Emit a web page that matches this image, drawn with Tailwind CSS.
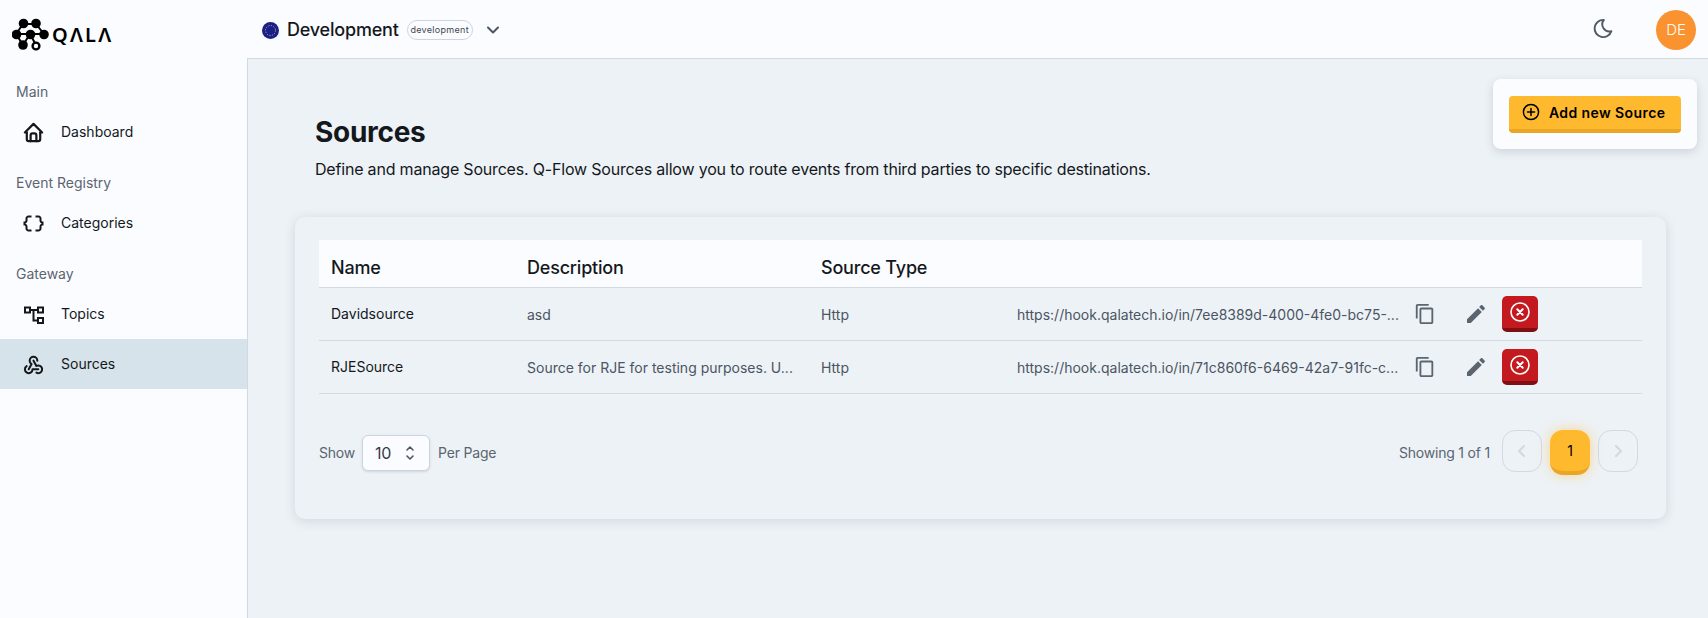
<!DOCTYPE html>
<html lang="en">
<head>
    <meta charset="UTF-8">
    <title>Sources</title>
    <script src="https://cdn.jsdelivr.net/npm/@tailwindcss/browser@4"></script>
</head>
<body class="bg-[#fbfcff] text-[#14181c] font-[Inter,sans-serif]">
    <div class="flex h-[618px] w-[1708px] overflow-hidden">

        <!-- Sidebar -->
        <aside class="w-[247px] shrink-0 bg-[#fbfcff]">
            <div class="h-[76px] pl-[12px] pt-[13px] flex items-start gap-[0px]">
                <svg class="w-[40px] h-[44px] shrink-0" viewBox="11 16 40 44" fill="#000">
                    <path d="M22 27H35M22 27L15 37M35 27L43 37M15 37H43M29 37L22 48M29 37L35 48M15 37L22 48" stroke="#000" stroke-width="2" fill="none"/>
                    <circle cx="22.5" cy="26.5" r="4.8"/><circle cx="35" cy="26.5" r="4.8"/>
                    <circle cx="15.5" cy="37.5" r="4.8"/><circle cx="29.5" cy="37.5" r="4.8"/><circle cx="43" cy="37.5" r="4.8"/>
                    <circle cx="22" cy="48" r="4.8"/>
                    <circle cx="35" cy="49" r="3.4" fill="#fbfcff" stroke="#000" stroke-width="2.4"/>
                </svg>
                <span class="text-[20px] leading-[24px] mt-[10px] font-semibold tracking-[2.2px] text-black font-['Noto_Sans',sans-serif]">QΛLΛ</span>
            </div>

            <p class="pl-4 text-sm leading-5 text-[#5b6570] mt-[6px]">Main</p>
            <a class="h-[50px] mt-[5px] pl-[22px] flex items-center gap-[16px] text-sm">
                <svg class="w-[23px] h-[23px] shrink-0" viewBox="0 0 24 24" fill="none" stroke="#14181c" stroke-width="2.3" stroke-linecap="round" stroke-linejoin="round"><path d="M5 12l-2 0l9 -9l9 9l-2 0"/><path d="M5 12v7a2 2 0 0 0 2 2h10a2 2 0 0 0 2 -2v-7"/><path d="M9 21v-6a2 2 0 0 1 2 -2h2a2 2 0 0 1 2 2v6"/></svg>
                Dashboard
            </a>

            <p class="pl-4 text-sm leading-5 text-[#5b6570] mt-[16px]">Event Registry</p>
            <a class="h-[50px] mt-[5px] pl-[21px] flex items-center gap-[15px] text-sm">
                <svg class="w-[25px] h-[25px] shrink-0" viewBox="-0.5 -0.5 25 25" fill="#14181c"><path d="M4 7v2c0 .55-.45 1-1 1H2v4h1c.55 0 1 .45 1 1v2c0 1.65 1.35 3 3 3h3v-2H7c-.55 0-1-.45-1-1v-2c0-1.3-.84-2.42-2-2.83v-.34C5.16 11.42 6 10.3 6 9V7c0-.55.45-1 1-1h3V4H7C5.35 4 4 5.35 4 7zM21 10c-.55 0-1-.45-1-1V7c0-1.65-1.35-3-3-3h-3v2h3c.55 0 1 .45 1 1v2c0 1.3.84 2.42 2 2.83v.34c-1.16.41-2 1.52-2 2.83v2c0 .55-.45 1-1 1h-3v2h3c1.65 0 3-1.35 3-3v-2c0-.55.45-1 1-1h1v-4h-1z"/></svg>
                Categories
            </a>

            <p class="pl-4 text-sm leading-5 text-[#5b6570] mt-[16px]">Gateway</p>
            <a class="h-[50px] mt-[5px] pl-[21px] flex items-center gap-[15px] text-sm">
                <svg class="w-[25px] h-[25px] shrink-0" viewBox="0 0 25 25" fill="none" stroke="#14181c" stroke-width="2"><rect x="4" y="5.5" width="5" height="5"/><rect x="17" y="5.5" width="5" height="5"/><rect x="17" y="16" width="5" height="5"/><path d="M9 8H17M12.5 8V18.5H17"/></svg>
                Topics
            </a>
            <a class="h-[50px] pl-[22px] flex items-center gap-[16px] text-sm bg-[#d7e3ea]">
                <svg class="w-[23px] h-[23px] shrink-0" viewBox="0 0 24 24" fill="none" stroke="#14181c" stroke-width="2.1" stroke-linecap="round" stroke-linejoin="round"><path d="M4.876 13.61a4 4 0 1 0 6.124 3.39h6"/><path d="M15.066 20.502a4 4 0 1 0 1.934 -7.502c-.706 0 -1.424 .179 -2 .5l-3 -5.5"/><path d="M16 8a4 4 0 1 0 -8 0c0 1.506 .77 2.818 2 3.5l-3 5.5"/></svg>
                Sources
            </a>
        </aside>

        <div class="flex-1 flex flex-col relative min-w-0">
            <!-- Header -->
            <header class="h-[58px] shrink-0 pl-[15px] pr-[12px] pt-[2px] flex items-center bg-[#fbfcff] relative">
                <svg class="w-[17px] h-[17px] shrink-0" viewBox="0 0 17 17">
                    <circle cx="8.5" cy="8.5" r="8.5" fill="#1a1f8c"/>
                    <circle cx="8.5" cy="8.5" r="5" fill="none" stroke="#e8c840" stroke-width="1" stroke-dasharray="1 1.6"/>
                </svg>
                <span class="ml-[8px] text-[18px] leading-6 font-medium tracking-[-0.2px]">Development</span>
                <span class="ml-[8px] h-[20px] w-[66px] rounded-full border border-[#cbd5e1] flex items-center justify-center text-[9px] tracking-[.3px] text-[#3f4650]">development</span>
                <svg class="ml-[13px] w-[14px] h-[14px]" viewBox="0 0 14 14" fill="none" stroke="#4b5563" stroke-width="2" stroke-linecap="round" stroke-linejoin="round"><path d="M2 4.5L7 9.5L12 4.5"/></svg>
                <svg class="ml-auto w-[23px] h-[23px] mb-[4px]" viewBox="0 0 24 24" fill="none" stroke="#4f5a66" stroke-width="2" stroke-linecap="round" stroke-linejoin="round"><path d="M12 3c.132 0 .263 0 .393 0a7.5 7.5 0 0 0 7.837 11.87a9 9 0 1 1 -8.23 -11.87z"/></svg>
                <div class="ml-[41px] w-[40px] h-[40px] rounded-full bg-[#f9922f] text-white text-[15px] font-light flex items-center justify-center">DE</div>
            </header>

            <!-- Main content -->
            <main class="flex-1 bg-[#edf2f6] border-t border-l border-[#d3d9e0] pl-[47px] pr-[42px]">
                <h1 class="mt-[55px] ml-[20px] text-[28px] leading-9 font-bold tracking-[-0.3px]">Sources</h1>
                <p class="ml-[20px] mt-[7px] text-[16px] leading-6 tracking-[-0.19px]">Define and manage Sources. Q-Flow Sources allow you to route events from third parties to specific destinations.</p>

                <section class="mt-[36px] h-[302px] rounded-[10px] bg-[#edf2f6] shadow-[0_2px_12px_rgba(30,50,80,0.14)] px-[24px] pt-[23px]">
                    <!-- Table head -->
                    <div class="grid grid-cols-[196px_294px_196px_1fr] h-[48px] items-center bg-[#fbfcff] border-b border-[#d3d9e0] pt-[8px] pl-[12px] text-[18px] font-medium tracking-[-0.2px]">
                        <span>Name</span><span>Description</span><span>Source Type</span><span></span>
                    </div>
                    <!-- Rows -->
                    <div class="grid grid-cols-[196px_294px_196px_485px_auto] h-[53px] items-center border-b border-[#d3d9e0] pl-[12px] text-[14px]">
                        <span class="mb-[2px] text-[#14181c]">Davidsource</span>
                        <span class="text-[#4b5563]">asd</span>
                        <span class="text-[#4b5563]">Http</span>
                        <span class="text-[#4b5563] flex items-center">
                            <span class="w-[397px] truncate">https://hook.qalatech.io/in/7ee8389d-4000-4fe0-bc75-...</span>
                            <svg class="w-[22px] h-[22px] text-[#5b6570]" viewBox="0 0 24 24" fill="currentColor"><path d="M16 1H4c-1.1 0-2 .9-2 2v14h2V3h12V1zm3 4H8c-1.1 0-2 .9-2 2v14c0 1.1.9 2 2 2h11c1.1 0 2-.9 2-2V7c0-1.1-.9-2-2-2zm0 16H8V7h11v14z"/></svg>
                            <svg class="w-[24px] h-[24px] text-[#5b6570] ml-[28px]" viewBox="0 0 24 24" fill="currentColor"><path d="M3 17.25V21h3.75L17.81 9.94l-3.75-3.75L3 17.25zM20.71 7.04c.39-.39.39-1.02 0-1.41l-2.34-2.34c-.39-.39-1.02-.39-1.41 0l-1.83 1.83 3.75 3.75 1.83-1.83z"/></svg>
                        </span>
                        <button class="w-[36px] h-[36px] rounded-[5px] bg-[#c4191f] border-b-[4px] border-[#7e1015] flex items-center justify-center">
                            <svg class="w-[22px] h-[22px]" viewBox="0 0 22 22" fill="none" stroke="#fff"><circle cx="11" cy="11" r="9" stroke-width="1.6"/><path d="M8.3 8.3L13.7 13.7M13.7 8.3L8.3 13.7" stroke-width="2" stroke-linecap="round"/></svg>
                        </button>
                    </div>
                    <div class="grid grid-cols-[196px_294px_196px_485px_auto] h-[53px] items-center border-b border-[#d3d9e0] pl-[12px] text-[14px]">
                        <span class="mb-[2px] text-[#14181c]">RJESource</span>
                        <span class="text-[#4b5563]">Source for RJE for testing purposes. U...</span>
                        <span class="text-[#4b5563]">Http</span>
                        <span class="text-[#4b5563] flex items-center">
                            <span class="w-[397px] truncate">https://hook.qalatech.io/in/71c860f6-6469-42a7-91fc-c...</span>
                            <svg class="w-[22px] h-[22px] text-[#5b6570]" viewBox="0 0 24 24" fill="currentColor"><path d="M16 1H4c-1.1 0-2 .9-2 2v14h2V3h12V1zm3 4H8c-1.1 0-2 .9-2 2v14c0 1.1.9 2 2 2h11c1.1 0 2-.9 2-2V7c0-1.1-.9-2-2-2zm0 16H8V7h11v14z"/></svg>
                            <svg class="w-[24px] h-[24px] text-[#5b6570] ml-[28px]" viewBox="0 0 24 24" fill="currentColor"><path d="M3 17.25V21h3.75L17.81 9.94l-3.75-3.75L3 17.25zM20.71 7.04c.39-.39.39-1.02 0-1.41l-2.34-2.34c-.39-.39-1.02-.39-1.41 0l-1.83 1.83 3.75 3.75 1.83-1.83z"/></svg>
                        </span>
                        <button class="w-[36px] h-[36px] rounded-[5px] bg-[#c4191f] border-b-[4px] border-[#7e1015] flex items-center justify-center">
                            <svg class="w-[22px] h-[22px]" viewBox="0 0 22 22" fill="none" stroke="#fff"><circle cx="11" cy="11" r="9" stroke-width="1.6"/><path d="M8.3 8.3L13.7 13.7M13.7 8.3L8.3 13.7" stroke-width="2" stroke-linecap="round"/></svg>
                        </button>
                    </div>

                    <!-- Pagination -->
                    <div class="mt-[41px] flex items-start text-[14px] text-[#5b6570] tracking-[-0.2px] pr-[4px]">
                        <span class="mt-[7px]">Show</span>
                        <div class="ml-[7px] w-[68px] h-[36px] rounded-[6px] border border-[#cbd5e1] bg-[#fbfcff] shadow-sm flex items-center pl-[12px] text-[16px] text-[#333b44]">
                            10
                            <svg class="ml-[13px] w-[12px] h-[18px]" viewBox="0 0 12 18" fill="none" stroke="#4b5563" stroke-width="1.6" stroke-linecap="round" stroke-linejoin="round"><path d="M3 6L6 3L9 6M3 12L6 15L9 12"/></svg>
                        </div>
                        <span class="ml-[8px] mt-[7px]">Per Page</span>
                        <span class="ml-auto mt-[7px] mr-[12px]">Showing 1 of 1</span>
                        <button class="mt-[-5px] w-[40px] h-[42px] rounded-[13px] border border-[#d3d9e0] flex items-center justify-center">
                            <svg class="w-[12px] h-[14px]" viewBox="0 0 12 14" fill="none" stroke="#d3d9e0" stroke-width="2.2" stroke-linecap="round" stroke-linejoin="round"><path d="M8 2L3 7L8 12"/></svg>
                        </button>
                        <button class="mt-[-5px] ml-[8px] w-[40px] h-[45px] rounded-[13px] bg-[#ffb92e] border-b-[4px] border-[#e8a526] shadow-[0_0_12px_rgba(255,185,46,0.5)] text-[14px] text-black">1</button>
                        <button class="mt-[-5px] ml-[8px] w-[40px] h-[42px] rounded-[13px] border border-[#d3d9e0] flex items-center justify-center">
                            <svg class="w-[12px] h-[14px]" viewBox="0 0 12 14" fill="none" stroke="#d3d9e0" stroke-width="2.2" stroke-linecap="round" stroke-linejoin="round"><path d="M4 2L9 7L4 12"/></svg>
                        </button>
                    </div>
                </section>
            </main>

            <!-- Floating action -->
            <div class="absolute top-[79px] right-[11px] w-[204px] h-[70px] rounded-[8px] bg-[#fbfcff] shadow-[0_3px_10px_rgba(30,50,80,0.16)] flex items-center justify-center">
                <button class="w-[172px] h-[37px] rounded-[4px] bg-[#ffb92e] border-b-[4px] border-[#e8a526] flex items-center pl-[13px] gap-[9px] text-[14px] font-semibold tracking-[.4px] text-black">
                    <svg class="w-[18px] h-[18px]" viewBox="0 0 18 18" fill="none" stroke="#000" stroke-width="1.5" stroke-linecap="round"><circle cx="9" cy="9" r="7.6"/><path d="M9 5.5V12.5M5.5 9H12.5"/></svg>
                    Add new Source
                </button>
            </div>
        </div>
    </div>
</body>
</html>
